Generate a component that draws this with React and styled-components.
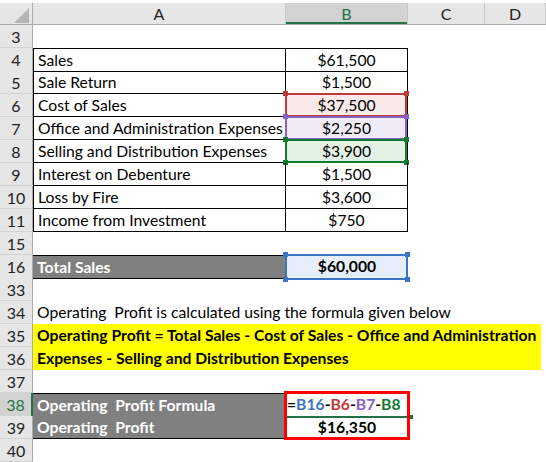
import React from 'react';
import styled, { createGlobalStyle, css } from 'styled-components';

const COLS = '33px 253px 122px 77px 61px';

const GlobalStyle = createGlobalStyle`
  html, body { margin: 0; padding: 0; background: #fff; }
  body { font-family: Lato, "Liberation Sans", sans-serif; }
`;

const Sheet = styled.div`
  width: 546px;
  height: 462px;
  overflow: hidden;
  padding-top: 3px;
  box-sizing: border-box;
  background: #fff;
`;

const HeaderRow = styled.div`
  display: grid;
  grid-template-columns: ${COLS};
  height: 22px;
  background: #e6e6e6;
  border-bottom: 1px solid #ababab;
  box-sizing: border-box;
`;

const Corner = styled.div`
  display: flex;
  align-items: flex-end;
  justify-content: flex-end;
  padding: 0 3px 1px 0;
  border-right: 1px solid #ababab;
`;

const ColHead = styled.div`
  display: flex;
  align-items: center;
  justify-content: center;
  font-size: 16px;
  color: #222;
  border-right: 1px solid #c8c8c8;
  ${(p) =>
    p.$selected &&
    css`
      background: #d2d2d2;
      color: #217346;
      box-shadow: inset 0 -2px 0 #217346;
    `}
`;

const Row = styled.div`
  display: grid;
  grid-template-columns: ${COLS};
  height: 23px;
`;

const RowNum = styled.div`
  display: flex;
  align-items: center;
  justify-content: center;
  background: #e6e6e6;
  border-right: 1px solid #ababab;
  border-bottom: 1px solid #d4d4d4;
  box-sizing: border-box;
  font-size: 16px;
  color: #222;
  ${(p) =>
    p.$active &&
    css`
      background: #d2d2d2;
      color: #217346;
      border-right: 2px solid #217346;
    `}
`;

const Cell = styled.div`
  position: relative;
  box-sizing: border-box;
  font-size: 15.7px;
  line-height: 22px;
  padding: 0 4px;
  white-space: nowrap;
  color: #000;
  text-align: ${(p) => p.$align || 'left'};
  font-weight: ${(p) => (p.$bold ? 700 : 400)};
  background: ${(p) => p.$fill || 'transparent'};
  ${(p) => p.$ink && css`color: ${p.$ink};`}
  ${(p) =>
    p.$box &&
    css`
      border-bottom: 1px solid #000;
      border-right: 1px solid #000;
    `}
  ${(p) => p.$boxLeft && css`border-left: 1px solid #000;`}
  ${(p) => p.$boxTop && css`border-top: 1px solid #000;`}
`;

const Yellow = styled(Cell)`
  grid-column: 2 / 6;
  margin-right: 5px;
  background: #ffff00;
  font-weight: 700;
  padding: 0 4px;
`;

const FormulaCell = styled(Cell)`
  font-weight: 700;
  padding-left: 1px;
`;

const Frame = styled.div`
  position: absolute;
  inset: -1px 0 -1px -1px;
  border: 2px solid ${(p) => p.$color};
  pointer-events: none;
`;

const Handle = styled.span`
  position: absolute;
  width: 5px;
  height: 5px;
  background: ${(p) => p.$color};
  ${(p) => (p.$top ? 'top: -4px;' : 'bottom: -4px;')}
  ${(p) => (p.$left ? 'left: -4px;' : 'right: -4px;')}
`;

const RedFrame = styled.div`
  position: absolute;
  left: -2px;
  right: -2px;
  top: -2px;
  height: 49px;
  border: 3px solid #ff0000;
  box-sizing: border-box;
  z-index: 2;
`;

const EditLine = styled.div`
  position: absolute;
  left: -1px;
  right: -1px;
  bottom: -1px;
  height: 2px;
  background: #217346;
  &::after {
    content: '';
    position: absolute;
    right: -4px;
    top: -1px;
    width: 4px;
    height: 4px;
    background: #217346;
  }
`;

const Ref = styled.span`
  color: ${(p) => p.$c};
`;

function Highlight({ color }) {
  return (
    <Frame $color={color}>
      <Handle $color={color} $top $left />
      <Handle $color={color} $top />
      <Handle $color={color} $left />
      <Handle $color={color} />
    </Frame>
  );
}

const refs = {
  red: { line: '#c0393b', fill: '#f9e9e8' },
  purple: { line: '#8461c2', fill: '#efecf8' },
  green: { line: '#0f7b2f', fill: '#e3f1e5' },
  blue: { line: '#3a75c4', fill: '#e6eef9' },
};

const data = [
  { n: 4, a: 'Sales', b: '$61,500' },
  { n: 5, a: 'Sale Return', b: '$1,500' },
  { n: 6, a: 'Cost of Sales', b: '$37,500', hl: 'red' },
  { n: 7, a: 'Office and Administration Expenses', b: '$2,250', hl: 'purple' },
  { n: 8, a: 'Selling and Distribution Expenses', b: '$3,900', hl: 'green' },
  { n: 9, a: 'Interest on Debenture', b: '$1,500' },
  { n: 10, a: 'Loss by Fire', b: '$3,600' },
  { n: 11, a: 'Income from Investment', b: '$750' },
];

const GRAY = '#808080';

export default function App() {
  return (
    <Sheet>
      <GlobalStyle />
      <HeaderRow>
        <Corner>
          <svg width="15" height="15" viewBox="0 0 15 15">
            <polygon points="15,0 15,15 0,15" fill="#b4b4b4" />
          </svg>
        </Corner>
        <ColHead>A</ColHead>
        <ColHead $selected>B</ColHead>
        <ColHead>C</ColHead>
        <ColHead>D</ColHead>
      </HeaderRow>

      <Row>
        <RowNum>3</RowNum>
      </Row>

      {data.map((r, i) => (
        <Row key={r.n}>
          <RowNum>{r.n}</RowNum>
          <Cell $box $boxLeft $boxTop={i === 0}>{r.a}</Cell>
          <Cell
            $box
            $boxTop={i === 0}
            $align="center"
            $fill={r.hl ? refs[r.hl].fill : undefined}
          >
            {r.b}
            {r.hl && <Highlight color={refs[r.hl].line} />}
          </Cell>
        </Row>
      ))}

      <Row>
        <RowNum>15</RowNum>
      </Row>

      <Row>
        <RowNum>16</RowNum>
        <Cell $box $boxTop $fill={GRAY} $ink="#fff" $bold>Total Sales</Cell>
        <Cell $align="center" $bold $fill={refs.blue.fill}>
          $60,000
          <Highlight color={refs.blue.line} />
        </Cell>
      </Row>

      <Row>
        <RowNum>33</RowNum>
      </Row>

      <Row>
        <RowNum>34</RowNum>
        <Cell>Operating&nbsp;&nbsp;Profit is calculated using the formula given below</Cell>
      </Row>

      <Row>
        <RowNum>35</RowNum>
        <Yellow>Operating Profit = Total Sales - Cost of Sales - Office and Administration</Yellow>
      </Row>

      <Row>
        <RowNum>36</RowNum>
        <Yellow>Expenses - Selling and Distribution Expenses</Yellow>
      </Row>

      <Row>
        <RowNum>37</RowNum>
      </Row>

      <Row>
        <RowNum $active>38</RowNum>
        <Cell $box $boxTop $fill={GRAY} $ink="#fff" $bold>
          Operating&nbsp;&nbsp;Profit Formula
        </Cell>
        <FormulaCell>
          =<Ref $c={refs.blue.line}>B16</Ref>-<Ref $c={refs.red.line}>B6</Ref>-
          <Ref $c={refs.purple.line}>B7</Ref>-<Ref $c={refs.green.line}>B8</Ref>
          <EditLine />
          <RedFrame />
        </FormulaCell>
      </Row>

      <Row>
        <RowNum>39</RowNum>
        <Cell $box $fill={GRAY} $ink="#fff" $bold>
          Operating&nbsp;&nbsp;Profit
        </Cell>
        <Cell $align="center" $bold>$16,350</Cell>
      </Row>

      <Row>
        <RowNum>40</RowNum>
      </Row>
    </Sheet>
  );
}
